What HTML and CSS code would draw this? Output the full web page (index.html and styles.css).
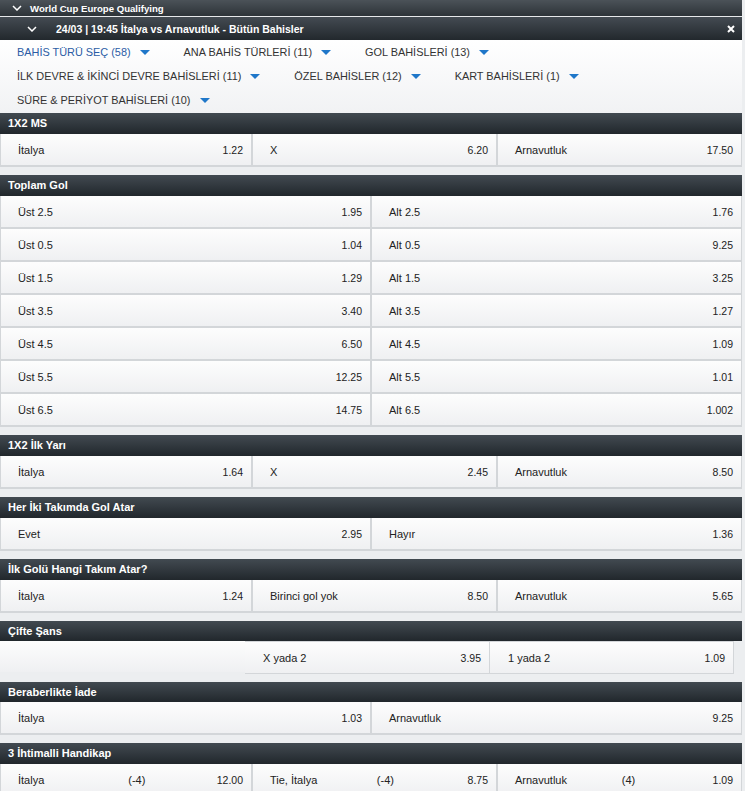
FILE: index.html
```html
<!DOCTYPE html>
<html lang="tr">
<head>
<meta charset="UTF-8" />
<meta name="viewport" content="width=device-width, initial-scale=1" />
<title>İtalya vs Arnavutluk - Bütün Bahisler</title>
<link rel="stylesheet" href="styles.css">
</head>
<body>
<div class="page">

  <!-- League bar -->
  <div class="league-bar">
    <svg class="chevron" viewBox="0 0 10 6"><path d="M1 1 L5 5 L9 1"/></svg>
    <span>World Cup Europe Qualifying</span>
  </div>

  <!-- Event bar -->
  <div class="event-bar">
    <svg class="chevron" viewBox="0 0 10 6"><path d="M1 1 L5 5 L9 1"/></svg>
    <span class="event-title">24/03 | 19:45 İtalya vs Arnavutluk - Bütün Bahisler</span>
    <svg class="close" viewBox="0 0 8 8"><path d="M1 1 L7 7 M7 1 L1 7"/></svg>
  </div>

  <!-- Bet type filters -->
  <div class="filters">
    <div class="filter active">BAHİS TÜRÜ SEÇ (58)<span class="caret"></span></div>
    <div class="filter">ANA BAHİS TÜRLERİ (11)<span class="caret"></span></div>
    <div class="filter">GOL BAHİSLERİ (13)<span class="caret"></span></div>
    <div class="filter">İLK DEVRE &amp; İKİNCİ DEVRE BAHİSLERİ (11)<span class="caret"></span></div>
    <div class="filter">ÖZEL BAHİSLER (12)<span class="caret"></span></div>
    <div class="filter">KART BAHİSLERİ (1)<span class="caret"></span></div>
    <div class="filter">SÜRE &amp; PERİYOT BAHİSLERİ (10)<span class="caret"></span></div>
  </div>

  <section class="market">
    <h2 class="market-title">1X2 MS</h2>
    <div class="odds cols-3">
      <div class="cell"><span class="name">İtalya</span><span class="price">1.22</span></div>
      <div class="cell"><span class="name">X</span><span class="price">6.20</span></div>
      <div class="cell"><span class="name">Arnavutluk</span><span class="price">17.50</span></div>
    </div>
  </section>

  <section class="market">
    <h2 class="market-title">Toplam Gol</h2>
    <div class="odds cols-2">
      <div class="cell"><span class="name">Üst 2.5</span><span class="price">1.95</span></div>
      <div class="cell"><span class="name">Alt 2.5</span><span class="price">1.76</span></div>
      <div class="cell"><span class="name">Üst 0.5</span><span class="price">1.04</span></div>
      <div class="cell"><span class="name">Alt 0.5</span><span class="price">9.25</span></div>
      <div class="cell"><span class="name">Üst 1.5</span><span class="price">1.29</span></div>
      <div class="cell"><span class="name">Alt 1.5</span><span class="price">3.25</span></div>
      <div class="cell"><span class="name">Üst 3.5</span><span class="price">3.40</span></div>
      <div class="cell"><span class="name">Alt 3.5</span><span class="price">1.27</span></div>
      <div class="cell"><span class="name">Üst 4.5</span><span class="price">6.50</span></div>
      <div class="cell"><span class="name">Alt 4.5</span><span class="price">1.09</span></div>
      <div class="cell"><span class="name">Üst 5.5</span><span class="price">12.25</span></div>
      <div class="cell"><span class="name">Alt 5.5</span><span class="price">1.01</span></div>
      <div class="cell"><span class="name">Üst 6.5</span><span class="price">14.75</span></div>
      <div class="cell"><span class="name">Alt 6.5</span><span class="price">1.002</span></div>
    </div>
  </section>

  <section class="market">
    <h2 class="market-title">1X2 İlk Yarı</h2>
    <div class="odds cols-3">
      <div class="cell"><span class="name">İtalya</span><span class="price">1.64</span></div>
      <div class="cell"><span class="name">X</span><span class="price">2.45</span></div>
      <div class="cell"><span class="name">Arnavutluk</span><span class="price">8.50</span></div>
    </div>
  </section>

  <section class="market">
    <h2 class="market-title">Her İki Takımda Gol Atar</h2>
    <div class="odds cols-2">
      <div class="cell"><span class="name">Evet</span><span class="price">2.95</span></div>
      <div class="cell"><span class="name">Hayır</span><span class="price">1.36</span></div>
    </div>
  </section>

  <section class="market">
    <h2 class="market-title">İlk Golü Hangi Takım Atar?</h2>
    <div class="odds cols-3">
      <div class="cell"><span class="name">İtalya</span><span class="price">1.24</span></div>
      <div class="cell"><span class="name">Birinci gol yok</span><span class="price">8.50</span></div>
      <div class="cell"><span class="name">Arnavutluk</span><span class="price">5.65</span></div>
    </div>
  </section>

  <section class="market">
    <h2 class="market-title short">Çifte Şans</h2>
    <div class="odds chance">
      <div class="cell empty"></div>
      <div class="cell"><span class="name">X yada 2</span><span class="price">3.95</span></div>
      <div class="cell"><span class="name">1 yada 2</span><span class="price">1.09</span></div>
    </div>
  </section>

  <section class="market">
    <h2 class="market-title short">Beraberlikte İade</h2>
    <div class="odds cols-2">
      <div class="cell"><span class="name">İtalya</span><span class="price">1.03</span></div>
      <div class="cell"><span class="name">Arnavutluk</span><span class="price">9.25</span></div>
    </div>
  </section>

  <section class="market">
    <h2 class="market-title">3 İhtimalli Handikap</h2>
    <div class="odds cols-3">
      <div class="cell"><span class="name handicap-name">İtalya</span><span class="line">(-4)</span><span class="price">12.00</span></div>
      <div class="cell"><span class="name handicap-name">Tie, İtalya</span><span class="line">(-4)</span><span class="price">8.75</span></div>
      <div class="cell"><span class="name handicap-name">Arnavutluk</span><span class="line">(4)</span><span class="price">1.09</span></div>
    </div>
  </section>

</div>
</body>
</html>
```

FILE: styles.css
```css
/* General styling */
body {
  margin: 0;
  background: #eceef0;
  font-family: "Liberation Sans", Arial, sans-serif;
  color: #222;
}

.page {
  width: 742px;
}

/* Top bars */
.league-bar,
.event-bar {
  display: flex;
  align-items: center;
  color: #fff;
}

.league-bar {
  height: 16px;
  padding-left: 12px;
  font-size: 9.6px;
  font-weight: bold;
  background: linear-gradient(#4b5258, #2d3338);
  border-bottom: 1px solid #e6e8ea;
}
.league-bar .chevron {
  margin-right: 8px;
}

.event-bar {
  height: 23px;
  padding: 0 7px 0 27px;
  font-size: 10.5px;
  font-weight: bold;
  background: linear-gradient(#444b52, #22282d);
}
.event-bar .chevron {
  margin-right: 19px;
}

.chevron {
  width: 10px;
  height: 6px;
  fill: none;
  stroke: #fff;
  stroke-width: 1.5;
}

.close {
  width: 8px;
  height: 8px;
  margin-left: auto;
  stroke: #fff;
  stroke-width: 2;
}

/* Filter menu */
.filters {
  display: flex;
  flex-wrap: wrap;
  padding: 0 0 1px 17px;
  background: linear-gradient(#fff, #f1f2f4);
}

.filter {
  display: flex;
  align-items: center;
  height: 24px;
  margin-right: 34px;
  font-size: 10.9px;
  color: #333;
}
.filter.active {
  color: #2b5ca5;
}

.caret {
  width: 0;
  height: 0;
  margin-left: 9px;
  border-left: 5px solid transparent;
  border-right: 5px solid transparent;
  border-top: 5px solid #1f77c9;
}

/* Markets */
.market {
  margin-bottom: 8px;
}

.market-title {
  margin: 0;
  height: 21px;
  line-height: 21px;
  padding-left: 8px;
  font-size: 11px;
  font-weight: bold;
  color: #fff;
  background: linear-gradient(#424a51, #21272c);
}
.market-title.short {
  height: 20px;
  line-height: 20px;
}

.odds {
  display: grid;
  gap: 2px;
  padding: 0 1px 2px 1px;
  background: #d3d6d9;
}
.odds.cols-3 {
  grid-template-columns: 250px 1fr 1fr;
}
.odds.cols-2 {
  grid-template-columns: 1fr 1fr;
}

.cell {
  display: flex;
  align-items: center;
  height: 31px;
  padding: 0 8px 0 17px;
  font-size: 11px;
  background: linear-gradient(#fdfdfd, #eff0f2);
}
.cell .name {
  flex: 1;
}
.cell .price {
  font-size: 10.5px;
}
.cell .handicap-name {
  flex: 0 0 49%;
}
.cell .line {
  flex: 1;
}

/* Double chance row, first option missing */
.odds.chance {
  grid-template-columns: 245px 245px 244px;
  gap: 0;
  padding: 0;
  background: none;
}
.odds.chance .cell {
  border: 1px solid #d3d6d9;
  padding-left: 18px;
}
.odds.chance .cell + .cell {
  border-left: 0;
}
.odds.chance .cell.empty {
  border: 0;
}
```
